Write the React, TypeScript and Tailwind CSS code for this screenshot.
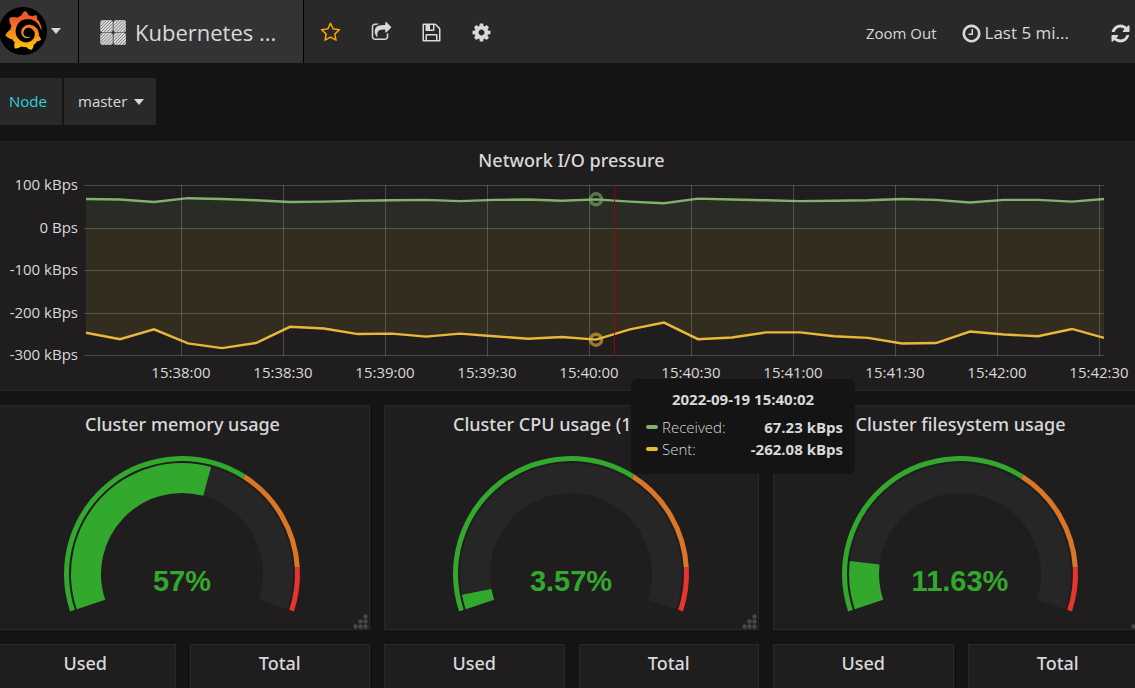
import React, { useState } from 'react';
import { SiGrafana } from 'react-icons/si';

const ICONS = {
  star: 'M1201 1004l306-297-422-62-189-382-189 382-422 62 306 297-73 421 378-199 377 199zm527-357q0 22-26 48l-363 354 86 500q1 7 1 20 0 50-41 50-19 0-40-12l-449-236-449 236q-22 12-40 12-21 0-31.5-14.5t-10.5-35.5q0-6 2-20l86-500-364-354q-25-27-25-48 0-37 56-46l502-73 225-455q19-41 49-41t49 41l225 455 502 73q56 9 56 46z',
  share: 'M1472 989v259q0 119-84.5 203.5t-203.5 84.5h-832q-119 0-203.5-84.5t-84.5-203.5v-832q0-119 84.5-203.5t203.5-84.5h255q13 0 22.5 9.5t9.5 22.5q0 27-26 32-77 26-133 60-10 4-16 4h-112q-66 0-113 47t-47 113v832q0 66 47 113t113 47h832q66 0 113-47t47-113v-214q0-19 18-29 28-13 54-37 16-16 35-8 21 9 21 29zm237-496l-384 384q-18 19-45 19-12 0-25-5-39-17-39-59v-192h-160q-323 0-438 131-119 137-74 473 3 23-20 34-8 2-12 2-16 0-26-13-10-14-21-31t-39.5-68.5-49.5-99.5-38.5-114-17.5-122q0-49 3.5-91t14-90 28-88 47-81.5 68.5-74 94.5-61.5 124.5-48.5 159.5-30.5 196.5-11h160v-192q0-42 39-59 13-5 25-5 26 0 45 19l384 384q19 19 19 45t-19 45z',
  save: 'M512 1536h768v-384h-768v384zm896 0h128v-896q0-14-10-38.5t-20-34.5l-281-281q-10-10-34-20t-39-10v416q0 40-28 68t-68 28h-576q-40 0-68-28t-28-68v-416h-128v1280h128v-416q0-40 28-68t68-28h832q40 0 68 28t28 68v416zm-384-928v-320q0-13-9.5-22.5t-22.5-9.5h-192q-13 0-22.5 9.5t-9.5 22.5v320q0 13 9.5 22.5t22.5 9.5h192q13 0 22.5-9.5t9.5-22.5zm640 32v928q0 40-28 68t-68 28h-1344q-40 0-68-28t-28-68v-1344q0-40 28-68t68-28h928q40 0 88 20t76 48l280 280q28 28 48 76t20 88z',
  cog: 'M1152 896q0-106-75-181t-181-75-181 75-75 181 75 181 181 75 181-75 75-181zm512-109v222q0 12-8 23t-20 13l-185 28q-19 54-39 91 35 50 107 138 10 12 10 25t-9 23q-27 37-99 108t-94 71q-12 0-26-9l-138-108q-44 23-91 38-16 136-29 186-7 28-36 28h-222q-14 0-24.5-8.5t-11.5-21.5l-28-184q-49-16-90-37l-141 107q-10 9-25 9-14 0-25-11-126-114-165-168-7-10-7-23 0-12 8-23 15-21 51-66.5t54-70.5q-27-50-41-99l-183-27q-13-2-21-12.5t-8-23.5v-222q0-12 8-23t19-13l186-28q14-46 39-92-40-57-107-138-10-12-10-24 0-10 9-23 26-36 98.5-107.5t94.5-71.5q13 0 26 10l138 107q44-23 91-38 16-136 29-186 7-28 36-28h222q14 0 24.5 8.5t11.5 21.5l28 184q49 16 90 37l142-107q9-9 24-9 13 0 25 10 129 119 165 170 7 8 7 22 0 12-8 23-15 21-51 66.5t-54 70.5q26 50 41 98l183 28q13 2 21 12.5t8 23.5z',
  clock: 'M1024 544v448q0 14-9 23t-23 9h-320q-14 0-23-9t-9-23v-64q0-14 9-23t23-9h224v-352q0-14 9-23t23-9h64q14 0 23 9t9 23zm416 352q0-148-73-273t-198-198-273-73-273 73-198 198-73 273 73 273 198 198 273 73 273-73 198-198 73-273zm224 0q0 209-103 385.5t-279.5 279.5-385.5 103-385.5-103-279.5-279.5-103-385.5 103-385.5 279.5-279.5 385.5-103 385.5 103 279.5 279.5 103 385.5z',
  refresh: 'M1639 1056q0 5-1 7-64 268-268 434.5t-478 166.5q-146 0-282.5-55t-243.5-157l-129 129q-19 19-45 19t-45-19-19-45v-448q0-26 19-45t45-19h448q26 0 45 19t19 45-19 45l-137 137q71 66 161 102t187 36q134 0 250-65t186-179q11-17 53-117 8-23 30-23h192q13 0 22.5 9.5t9.5 22.5zm25-800v448q0 26-19 45t-45 19h-448q-26 0-45-19t-19-45 19-45l138-138q-148-137-349-137-134 0-250 65t-186 179q-11 17-53 117-8 23-30 23h-199q-13 0-22.5-9.5t-9.5-22.5v-7q65-268 270-434.5t480-166.5q146 0 284 55.5t245 156.5l130-129q19-19 45-19t45 19 19 45z',
};

const Icon = ({ name }: { name: keyof typeof ICONS }) => (
  <svg viewBox="0 0 1792 1792" className="size-[21px] shrink-0 fill-current" aria-hidden="true">
    <path d={ICONS[name]} />
  </svg>
);

const Caret = () => (
  <svg viewBox="0 0 10 6" className="h-1.5 w-2.5 shrink-0 fill-current" aria-hidden="true">
    <path d="M0 0h10L5 6z" />
  </svg>
);

const DashboardIcon = () => (
  <svg viewBox="0 0 26 25" className="h-[25px] w-[26px] shrink-0" aria-hidden="true">
    <defs>
      <pattern id="hatch" width="2.2" height="2.2" patternUnits="userSpaceOnUse" patternTransform="rotate(45)">
        <rect width="2.2" height="2.2" fill="#e3e3e3" />
        <rect width="0.8" height="2.2" fill="#77777a" />
      </pattern>
    </defs>
    <g fill="url(#hatch)" stroke="#e0e0e0" strokeWidth="0.4">
      <rect x="0.5" y="0.3" width="12" height="11.8" rx="2" />
      <rect x="13.8" y="0.3" width="12" height="11.8" rx="2" />
      <rect x="0.5" y="13" width="12" height="11.8" rx="2" />
      <rect x="13.8" y="13" width="12" height="11.8" rx="2" />
    </g>
  </svg>
);

const TopNav = () => (
  <header className="flex h-[63px] bg-[#292929]">
    <button type="button" aria-label="Main menu" className="flex w-[79px] shrink-0 items-center gap-1 border-r border-black bg-[#333333] pb-0.5">
      <span className="-ml-px flex size-12 items-center justify-center rounded-full bg-black">
        <svg className="absolute size-0" aria-hidden="true">
          <linearGradient id="flame" x1="0" y1="0" x2="0" y2="1">
            <stop offset="0.2" stopColor="#f05a28" />
            <stop offset="1" stopColor="#fbca0a" />
          </linearGradient>
        </svg>
        <SiGrafana size={39} fill="url(#flame)" />
      </span>
      <Caret />
    </button>
    <button type="button" className="flex w-[225px] shrink-0 items-center gap-[9px] border-r border-black bg-[#333333] pt-0.5 pl-[21px] text-[22px]">
      <DashboardIcon />
      <span>Kubernetes ...</span>
    </button>
    <nav className="flex items-center pt-0.5 pl-px">
      <button type="button" aria-label="Star" className="flex w-[51px] justify-center text-[#ffa400]"><Icon name="star" /></button>
      <button type="button" aria-label="Share" className="flex w-[50px] justify-center"><Icon name="share" /></button>
      <button type="button" aria-label="Save" className="flex w-[50px] justify-center"><Icon name="save" /></button>
      <button type="button" aria-label="Settings" className="flex w-[50px] justify-center"><Icon name="cog" /></button>
    </nav>
    <div className="ml-auto flex items-center pt-[3px] pr-1">
      <button type="button" className="mr-6 text-[15px]">Zoom Out</button>
      <button type="button" className="mr-[41px] flex items-center gap-[3px] text-[17px]">
        <Icon name="clock" />
        Last 5 mi...
      </button>
      <button type="button" aria-label="Refresh"><Icon name="refresh" /></button>
    </div>
  </header>
);

const SubMenu = () => {
  const [node, setNode] = useState('master');

  return (
    <div className="mt-[15px] flex h-[47px] gap-0.5 text-[15px]">
      <label htmlFor="node" className="flex w-[62px] items-center bg-[#292929] pl-[9px] text-[#32d1df]">Node</label>
      <div className="relative flex w-[92px] items-center bg-[#292929]">
        <select id="node" value={node} onChange={(e) => setNode(e.target.value)} className="h-full w-full appearance-none bg-transparent pl-3.5">
          <option>master</option>
        </select>
        <span className="pointer-events-none absolute right-3"><Caret /></span>
      </div>
    </div>
  );
};

const RECEIVED = [68, 67, 61, 70, 68, 65, 61, 62, 64, 65, 66, 63, 66, 67, 64, 67.23, 62, 58, 69, 67, 65, 63, 64, 65, 68, 66, 60, 66, 66, 62, 68];
const SENT = [-246, -261, -238, -271, -282, -270, -232, -236, -249, -248, -255, -248, -254, -260, -256, -262.08, -238, -222, -261, -257, -245, -245, -254, -258, -271, -270, -243, -250, -254, -237, -258];
const TIMES = ['15:38:00', '15:38:30', '15:39:00', '15:39:30', '15:40:00', '15:40:30', '15:41:00', '15:41:30', '15:42:00', '15:42:30'];
const LEVELS = ['100 kBps', '0 Bps', '-100 kBps', '-200 kBps', '-300 kBps'];

const LEFT = 90;
const RIGHT = 1108;
const ZERO = 50;
const xAt = (i: number) => Math.min(LEFT + i * 34, RIGHT);
const yAt = (kbps: number) => ZERO - kbps * 0.426;
const toPoints = (values: number[]) => values.map((v, i) => `${xAt(i)},${yAt(v)}`).join(' ');

const series = [
  { name: 'Received', values: RECEIVED, color: '#7eb26d' },
  { name: 'Sent', values: SENT, color: '#eab839' },
];

const NetworkChart = () => (
  <svg viewBox="0 0 1151 212" className="block h-auto w-full" role="img" aria-label="Network I/O pressure">
    {series.map((s) => (
      <g key={s.name}>
        <polygon points={`${LEFT},${ZERO} ${toPoints(s.values)} ${RIGHT},${ZERO}`} fill={s.color} fillOpacity="0.1" />
        <polyline points={toPoints(s.values)} fill="none" stroke={s.color} strokeWidth="2.4" />
      </g>
    ))}
    <g stroke="#c8c8c8" strokeOpacity="0.26">
      {LEVELS.map((level, i) => (
        <line key={level} x1={LEFT - 2} x2={RIGHT} y1={Math.floor(yAt(100 - i * 100)) + 0.5} y2={Math.floor(yAt(100 - i * 100)) + 0.5} />
      ))}
      {TIMES.map((time, i) => (
        <line key={time} x1={Math.floor(185 + i * 102) + 0.5} x2={Math.floor(185 + i * 102) + 0.5} y1="7" y2="178" />
      ))}
    </g>
    {series.map((s) => (
      <circle key={s.name} cx={xAt(15)} cy={yAt(s.values[15])} r="5.5" fill="none" stroke={s.color} strokeOpacity="0.6" strokeWidth="3.5" />
    ))}
    <line x1="618.5" x2="618.5" y1="7" y2="178" stroke="#aa0000" strokeOpacity="0.8" />
    <g fill="#d8d9da" fontSize="15">
      {LEVELS.map((level, i) => (
        <text key={level} x="82" y={Math.floor(yAt(100 - i * 100)) + 5} textAnchor="end">{level}</text>
      ))}
      {TIMES.map((time, i) => (
        <text key={time} x={185 + i * 102} y="200" textAnchor="middle">{time}</text>
      ))}
    </g>
  </svg>
);

const Tooltip = () => (
  <div className="absolute top-[237px] left-[635px] z-10 w-56 rounded-md bg-[#141414] px-3 pt-[9px] pb-3.5 text-[15px]/[22px]">
    <div className="mb-1.5 text-center font-bold">2022-09-19 15:40:02</div>
    <div className="flex items-center">
      <span className="mr-1 ml-[3px] h-1 w-3 rounded-xs bg-[#7eb26d]" />
      <span className="font-light">Received:</span>
      <span className="ml-auto font-bold">67.23 kBps</span>
    </div>
    <div className="flex items-center">
      <span className="mr-1 ml-[3px] h-1 w-3 rounded-xs bg-[#eab839]" />
      <span className="font-light">Sent:</span>
      <span className="ml-auto font-bold">-262.08 kBps</span>
    </div>
  </div>
);

const PanelTitle = ({ children }: { children: React.ReactNode }) => (
  <h2 className="text-center font-['Noto_Sans','Open_Sans',sans-serif] text-[18px]/[36px] font-medium whitespace-nowrap">{children}</h2>
);

// Gauge sweeps 217 degrees, symmetric around the top
const SWEEP = 217;
const CX = 186;
const CY = 132;
const polar = (r: number, pct: number) => {
  const a = ((pct / 100 - 0.5) * SWEEP * Math.PI) / 180;
  return `${CX + r * Math.sin(a)} ${CY - r * Math.cos(a)}`;
};
const arc = (inner: number, outer: number, from: number, to: number) => {
  const large = ((to - from) / 100) * SWEEP > 180 ? 1 : 0;
  return `M${polar(outer, from)}A${outer} ${outer} 0 ${large} 1 ${polar(outer, to)}L${polar(inner, to)}A${inner} ${inner} 0 ${large} 0 ${polar(inner, from)}Z`;
};

const GaugePanel = ({ title, value }: { title: string; value: number }) => (
  <section className="relative border border-[#292929] bg-[#1f1d1e]">
    <PanelTitle>{title}</PanelTitle>
    <svg viewBox="0 0 373 187" className="block h-auto w-full" role="img" aria-label={title}>
      <path d={arc(81, 111, 0, 100)} fill="#262626" />
      <path d={arc(81, 111, 0, value)} fill="#32a82d" />
      <path d={arc(113, 118, 0, 65)} fill="#32a82d" />
      <path d={arc(113, 118, 65, 90)} fill="#dc7627" />
      <path d={arc(113, 118, 90, 100)} fill="#e7342f" />
      <text x={CX} y="149" textAnchor="middle" fill="#32a82d" fontSize="29" fontWeight="700" fontFamily="'Liberation Sans', sans-serif">{value}%</text>
    </svg>
    <svg viewBox="0 0 15 15" className="absolute right-px bottom-0 size-[15px] fill-[#484848]" aria-hidden="true">
      <circle cx="12.5" cy="2.5" r="2.2" />
      <circle cx="7.5" cy="7.5" r="2.2" />
      <circle cx="12.5" cy="7.5" r="2.2" />
      <circle cx="2.5" cy="12.5" r="2.2" />
      <circle cx="7.5" cy="12.5" r="2.2" />
      <circle cx="12.5" cy="12.5" r="2.2" />
    </svg>
  </section>
);

const StatPanel = ({ title }: { title: string }) => (
  <section className="flex-1 border border-b-0 border-[#292929] bg-[#1f1d1e] pb-[7px]">
    <PanelTitle>{title}</PanelTitle>
  </section>
);

const gauges = [
  { title: 'Cluster memory usage', value: 57 },
  { title: 'Cluster CPU usage (1m avg)', value: 3.57 },
  { title: 'Cluster filesystem usage', value: 11.63 },
];

export default function App() {
  return (
    <div className="flex min-h-screen flex-col overflow-hidden bg-[#141414] font-['Open_Sans','Noto_Sans',sans-serif] text-[#d8d9da]">
      <TopNav />
      <SubMenu />
      <main className="mt-4 -mr-[13px] -ml-[5px] flex flex-1 flex-col gap-3.5">
        <section className="relative border border-[#22262c] bg-[#1f1d1e]">
          <PanelTitle>Network I/O pressure</PanelTitle>
          <NetworkChart />
          <Tooltip />
        </section>
        <div className="grid grid-cols-3 gap-3.5">
          {gauges.map((g) => (
            <GaugePanel key={g.title} title={g.title} value={g.value} />
          ))}
        </div>
        <div className="grid flex-1 grid-cols-3 gap-3.5">
          {gauges.map((g) => (
            <div key={g.title} className="flex gap-3.5">
              <StatPanel title="Used" />
              <StatPanel title="Total" />
            </div>
          ))}
        </div>
      </main>
    </div>
  );
}
